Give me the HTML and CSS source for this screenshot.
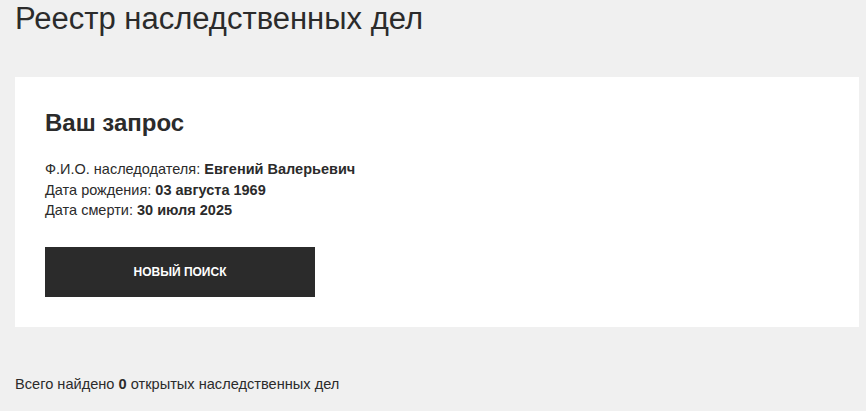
FILE: index.html
```html
<!DOCTYPE html>
<html lang="ru">
<head>
<meta charset="utf-8">
<title>Реестр наследственных дел</title>
<link rel="stylesheet" href="styles.css">
</head>
<body>
<div class="page">
  <h1 class="page-title">Реестр наследственных дел</h1>
  <section class="card">
    <h2 class="card-title">Ваш запрос</h2>
    <div class="details">
      <div class="row">Ф.И.О. наследодателя: <b>Евгений Валерьевич</b></div>
      <div class="row">Дата рождения: <b>03 августа 1969</b></div>
      <div class="row">Дата смерти: <b>30 июля 2025</b></div>
    </div>
    <button class="btn" type="button">Новый поиск</button>
  </section>
  <p class="summary">Всего найдено <b>0</b> открытых наследственных дел</p>
</div>
</body>
</html>
```
FILE: styles.css
```css
html, body {
  margin: 0;
  padding: 0;
  background: #f0f0f0;
  color: #2b2b2b;
  font-family: "Liberation Sans", Arial, sans-serif;
}
.page {
  padding: 0 7px 0 15px;
}
.page-title {
  margin: 0;
  font-size: 31px;
  font-weight: 400;
  line-height: 37px;
  color: #2b2b2b;
}
.card {
  margin-top: 40px;
  background: #fff;
  padding: 32px 30px 30px;
}
.card-title {
  margin: 0;
  font-size: 24px;
  font-weight: 700;
  line-height: 28px;
}
.details {
  margin-top: 22px;
  font-size: 14.5px;
  line-height: 20.5px;
}
.details b { font-weight: 700; }
.btn {
  margin-top: 26px;
  display: block;
  width: 270px;
  height: 50px;
  border: 0;
  background: #2b2b2b;
  color: #fff;
  font-family: inherit;
  font-size: 12px;
  font-weight: 700;
  text-transform: uppercase;
  cursor: pointer;
}
.summary {
  margin: 47px 0 0;
  font-size: 14.6px;
  line-height: 20px;
}
```
